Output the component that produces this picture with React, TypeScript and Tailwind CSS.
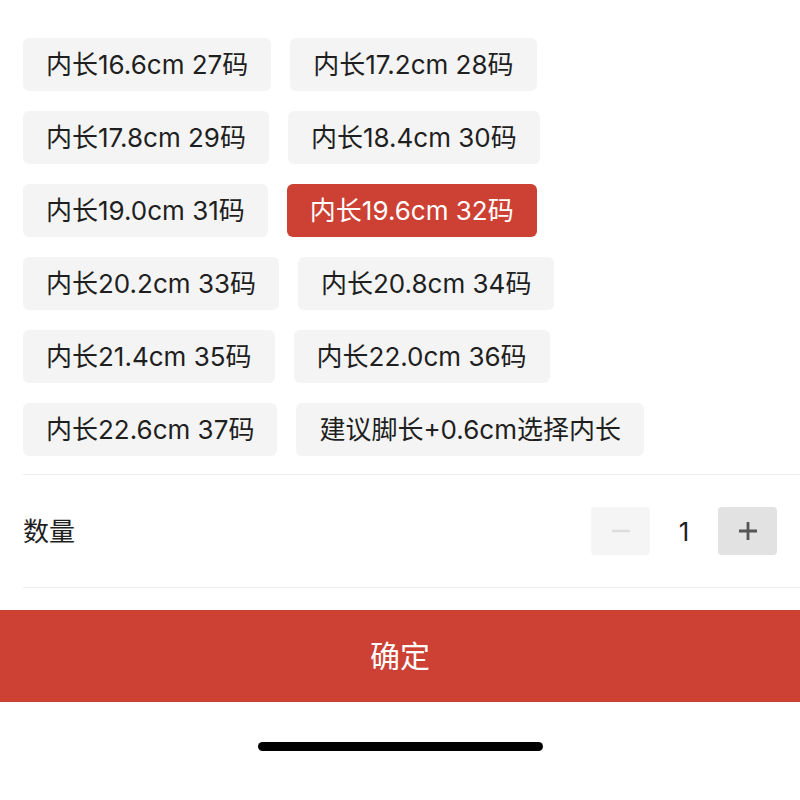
import { useState } from "react";

const SIZES = [
  "内长16.6cm 27码",
  "内长17.2cm 28码",
  "内长17.8cm 29码",
  "内长18.4cm 30码",
  "内长19.0cm 31码",
  "内长19.6cm 32码",
  "内长20.2cm 33码",
  "内长20.8cm 34码",
  "内长21.4cm 35码",
  "内长22.0cm 36码",
  "内长22.6cm 37码",
  "建议脚长+0.6cm选择内长",
];

const FONT = { fontFamily: '"Inter", "Noto Sans CJK SC", sans-serif' };

export default function App() {
  const [selected, setSelected] = useState(5);
  const [qty, setQty] = useState(1);

  return (
    <div className="w-[800px] h-[800px] bg-white pt-[38px] text-[#1f1f1f]" style={FONT}>
      <div className="pl-[23px]">
        {/* Size chips */}
        <div className="flex flex-wrap gap-x-[19px] gap-y-[20px] pr-[23px]">
          {SIZES.map((s, i) => (
            <button
              key={s}
              onClick={() => setSelected(i)}
              className={
                i === selected
                  ? "h-[53px] px-[23px] rounded-[6px] bg-[#cc4134] text-white text-[26px] flex items-center"
                  : "h-[53px] px-[23px] rounded-[6px] bg-[#f4f4f4] text-[#1f1f1f] text-[26px] flex items-center"
              }
            >
              {s}
            </button>
          ))}
        </div>

        <div className="mt-[18px] border-t border-[#ededed]" />

        {/* Quantity */}
        <div className="h-[112px] flex items-center justify-between pr-[23px]">
          <span className="text-[26px]">数量</span>
          <div className="flex items-center">
            <button
              onClick={() => setQty(Math.max(1, qty - 1))}
              className="w-[59px] h-[48px] rounded-[4px] bg-[#f5f5f5] flex items-center justify-center"
            >
              <svg width="20" height="20" viewBox="0 0 20 20">
                <path d="M1 10h18" stroke="#dcdcdc" strokeWidth="2.5" />
              </svg>
            </button>
            <span className="w-[68px] text-center text-[26px]">{qty}</span>
            <button
              onClick={() => setQty(qty + 1)}
              className="w-[59px] h-[48px] rounded-[4px] bg-[#e2e2e2] flex items-center justify-center"
            >
              <svg width="20" height="20" viewBox="0 0 20 20">
                <path d="M1 10h18M10 1v18" stroke="#555" strokeWidth="2.8" />
              </svg>
            </button>
          </div>
        </div>

        <div className="border-t border-[#ededed]" />
      </div>

      {/* Confirm */}
      <button className="mt-[22px] w-full h-[92px] bg-[#cc4134] text-white text-[30px] flex items-center justify-center">
        确定
      </button>

      {/* Home indicator */}
      <div className="mt-[40px] mx-auto w-[285px] h-[9px] rounded-full bg-black" />
    </div>
  );
}
